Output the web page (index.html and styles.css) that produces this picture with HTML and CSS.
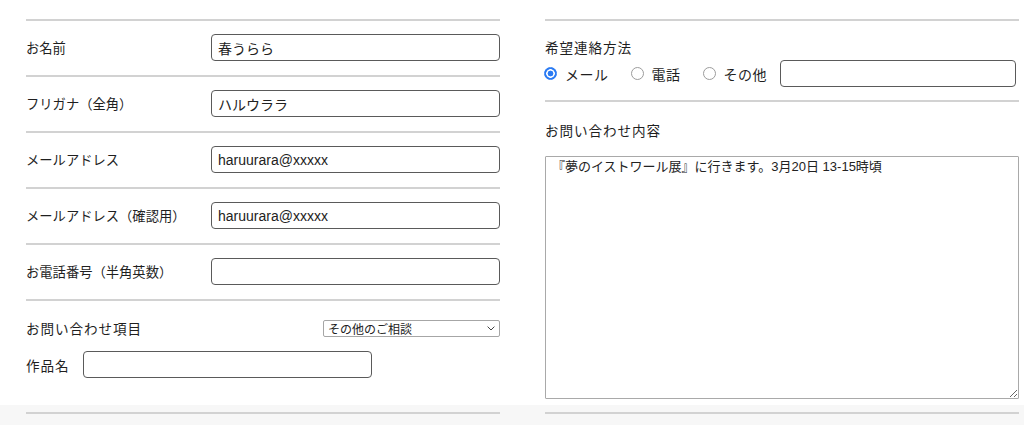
FILE: index.html
```html
<!DOCTYPE html>
<html lang="ja">
<head>
<meta charset="utf-8">
<title>お問い合わせ</title>
<link rel="stylesheet" href="styles.css">
</head>
<body>
<div class="page">
  <div class="sheet">
    <div class="col">
      <div class="row"><span class="label">お名前</span><input class="field" type="text" value="春うらら"></div>
      <div class="row"><span class="label">フリガナ（全角）</span><input class="field" type="text" value="ハルウララ"></div>
      <div class="row"><span class="label">メールアドレス</span><input class="field" type="text" value="haruurara@xxxxx"></div>
      <div class="row"><span class="label">メールアドレス（確認用）</span><input class="field" type="text" value="haruurara@xxxxx"></div>
      <div class="row"><span class="label">お電話番号（半角英数）</span><input class="field" type="text" value=""></div>
      <div class="row multi">
        <div class="line"><span class="label wide">お問い合わせ項目</span>
          <div class="select-wrap">
            <select class="select"><option>その他のご相談</option></select>
            <svg class="chev" width="8" height="5" viewBox="0 0 8 5"><path d="M0.6 0.6 L4 4 L7.4 0.6" fill="none" stroke="#444" stroke-width="1"/></svg>
          </div>
        </div>
        <div class="line work"><span class="label wide short">作品名</span><input class="field work-field" type="text" value=""></div>
      </div>
    </div>
    <div class="col">
      <div class="rrow contact">
        <div class="label wide">希望連絡方法</div>
        <div class="radios">
          <label class="radio"><input type="radio" name="c" checked><span>メール</span></label>
          <label class="radio"><input type="radio" name="c"><span>電話</span></label>
          <label class="radio"><input type="radio" name="c"><span>その他</span></label>
          <input class="field other" type="text" value="">
        </div>
      </div>
      <div class="rrow inquiry">
        <div class="label wide">お問い合わせ内容</div>
        <textarea class="message">『夢のイストワール展』に行きます。3月20日 13-15時頃</textarea>
      </div>
    </div>
  </div>
  <div class="foot">
    <div class="rule"></div>
    <div class="rule"></div>
  </div>
</div>
</body>
</html>
```
FILE: styles.css
```css
html, body {
  margin: 0;
  padding: 0;
}
body {
  background: #f7f7f7;
  font-family: "Liberation Sans", "Noto Sans CJK JP", sans-serif;
  color: #222;
  height: 425px;
  overflow: hidden;
}
.page {
  width: 1024px;
}
.sheet {
  background: #fff;
  display: grid;
  grid-template-columns: 474px 474px;
  column-gap: 45px;
  padding: 19px 5px 0 26px;
}
.foot {
  display: grid;
  grid-template-columns: 474px 474px;
  column-gap: 45px;
  padding: 7px 5px 0 26px;
}
.rule {
  border-top: 2px solid #d2d2d2;
}
.label {
  font-family: "Noto Sans CJK JP", sans-serif;
  font-size: 13.3px;
  line-height: 20px;
  color: #1f1f1f;
  white-space: nowrap;
}
.label.wide {
  font-size: 13.6px;
  letter-spacing: 0.9px;
}
.row {
  border-top: 2px solid #d2d2d2;
  padding: 13px 0 14px;
  display: flex;
  align-items: center;
}
.row > .label {
  width: 185px;
  flex: none;
}
.field {
  box-sizing: border-box;
  height: 27px;
  border: 1px solid #5a5a5a;
  border-radius: 4px;
  padding: 0 6px;
  font-family: "Liberation Sans", "Noto Sans CJK JP", sans-serif;
  font-size: 14px;
  color: #222;
  background: #fff;
  outline: none;
  margin: 0;
}
.row > .field {
  flex: 1;
  min-width: 0;
}
.row.multi {
  display: block;
  padding: 17px 0 27px;
}
.line {
  display: flex;
  align-items: center;
  justify-content: space-between;
  height: 20px;
}
.line.work {
  justify-content: flex-start;
  height: 27px;
  margin-top: 13px;
}
.label.short {
  width: 57px;
  flex: none;
}
.work-field {
  width: 289px;
}
.select-wrap {
  position: relative;
  width: 177px;
  height: 17px;
}
.select {
  appearance: none;
  -webkit-appearance: none;
  box-sizing: border-box;
  display: block;
  width: 177px;
  height: 17px;
  font-family: "Noto Sans CJK JP", sans-serif;
  font-size: 12px;
  line-height: 15px;
  color: #222;
  border: 1px solid #a6a6a6;
  border-radius: 2px;
  padding: 0 4px;
  background: #fff;
  margin: 0;
  outline: none;
}
.chev {
  position: absolute;
  right: 5px;
  top: 6px;
  pointer-events: none;
}
.rrow {
  border-top: 2px solid #d2d2d2;
}
.contact {
  padding: 16px 0 13px;
}
.radios {
  display: flex;
  align-items: center;
  margin-top: 3px;
  height: 27px;
}
.radio {
  display: flex;
  align-items: center;
  gap: 8px;
  margin-right: 23px;
  font-family: "Noto Sans CJK JP", sans-serif;
  font-size: 14px;
  letter-spacing: 0.5px;
  line-height: 20px;
  color: #1f1f1f;
}
.radio:nth-child(3) {
  margin-right: 13px;
}
.radio input {
  appearance: none;
  -webkit-appearance: none;
  width: 13px;
  height: 13px;
  margin: 0 0 0 -1px;
  border: 1px solid #9c9c9c;
  border-radius: 50%;
  background: #fff;
  box-sizing: border-box;
}
.radio input:checked {
  border: 1px solid #2b7bf3;
  background: radial-gradient(circle, #2b7bf3 0 2.6px, #fff 3.2px 4px, #2b7bf3 4.6px);
}
.other {
  flex: 1;
  min-width: 0;
  margin-right: 3px;
}
.inquiry {
  padding: 18px 0 6px;
}
.message {
  display: block;
  box-sizing: border-box;
  width: 474px;
  height: 243px;
  margin-top: 16px;
  border: 1px solid #a9a9a9;
  border-radius: 1px;
  padding: 1px 6px;
  font-family: "Liberation Sans", "Noto Sans CJK JP", sans-serif;
  font-size: 13px;
  line-height: 18px;
  color: #222;
  outline: none;
}
```
